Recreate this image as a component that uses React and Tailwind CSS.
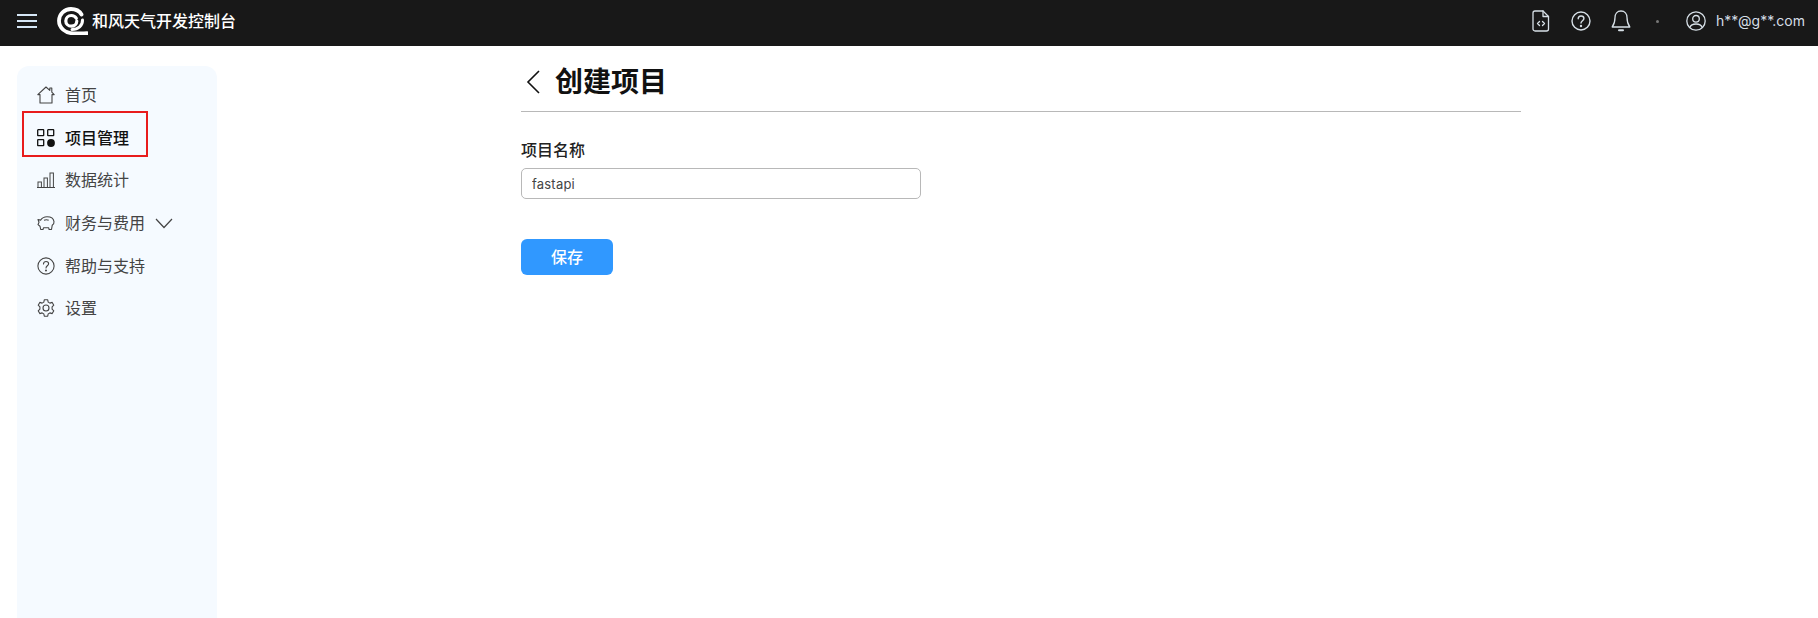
const fontStack = { fontFamily: 'Inter, "Noto Sans CJK SC", sans-serif' }

const HomeIcon = () => (
  <svg width="18" height="18" viewBox="0 0 18 18" fill="none" stroke="currentColor" strokeWidth="1.100" strokeLinejoin="round">
    <path d="M0.800 8.600L9 1l3.800 3.300V2h2v4.200l2.400 2.400h-2.200v8.400H3v-8.400z" />
  </svg>
)

const ProjectIcon = () => (
  <svg width="18" height="18" viewBox="0 0 18 18" fill="none" stroke="currentColor" strokeWidth="1.300">
    <rect x="0.700" y="0.700" width="6" height="6" rx="0.500" />
    <rect x="10.700" y="0.700" width="6" height="6" rx="0.500" />
    <rect x="0.700" y="10.700" width="6" height="6" rx="0.500" />
    <circle cx="14" cy="14" r="3.900" fill="currentColor" stroke="none" />
  </svg>
)

const ChartIcon = () => (
  <svg width="18" height="18" viewBox="0 0 18 18" fill="none" stroke="currentColor" strokeWidth="1">
    <path d="M0 16.500h18" />
    <rect x="1" y="11" width="3.400" height="5.500" />
    <rect x="7" y="7" width="3.400" height="9.500" />
    <rect x="13" y="2" width="3.400" height="14.500" />
  </svg>
)

const PiggyIcon = () => (
  <svg width="18" height="18" viewBox="0 0 18 18" fill="none" stroke="currentColor" strokeWidth="1.100" strokeLinejoin="round">
    <path d="M1 5.500l2.600.6C5 4 7 2.800 10 2.800c3.800 0 6.600 2 7 4.800.2 1.500-.6 2.900-1.800 3.700l-.7 4.200h-2.400l-.4-1.700H6.500L6 15.500H3.700L3 12.200 1 10.600l1-2.300z" />
    <path d="M7 6.300c1.500-.7 3.200-.7 4.700 0" />
  </svg>
)

const HelpIcon = ({ size = 18, width = 1.200 }) => (
  <svg width={size} height={size} viewBox="0 0 20 20" fill="none" stroke="currentColor" strokeWidth={width} strokeLinecap="round">
    <circle cx="10" cy="10" r="9" />
    <path d="M7.200 7.800c0-1.700 1.300-2.800 2.900-2.800s2.800 1.100 2.800 2.500c0 2.200-2.900 2.300-2.900 4.600" />
    <circle cx="10" cy="15" r="0.500" fill="currentColor" />
  </svg>
)

const GearIcon = () => (
  <svg width="18" height="18" viewBox="0 0 18 18" fill="none" stroke="currentColor" strokeWidth="1.100" strokeLinejoin="round">
    <path d="M7.300 .8h3.400l.5 2.300 1.700 1 2.300-.7 1.600 2.800-1.700 1.600v2.400l1.700 1.600-1.600 2.800-2.300-.7-1.700 1-.5 2.300H7.300l-.5-2.300-1.700-1-2.300.7-1.600-2.800 1.700-1.600V7.800L1.200 6.200l1.600-2.800 2.300.7 1.700-1z" />
    <circle cx="9" cy="9" r="3" />
  </svg>
)

// spiral mark: outer sweep with a tail at lower right, inner open ring
const Logo = () => (
  <svg width="31" height="28" viewBox="0 0 31 28" fill="none" stroke="#fff" strokeLinecap="round">
    <path d="M30 26.200c-4 .4-9 .3-13.500.1C8 26.300 2 20.800 2 13.800 2 6.800 7.500 2 14 2c4.500 0 8.500 2 10.500 5.500" strokeWidth="3.800" />
    <path d="M25.500 13c.3 5.500-4.500 9.500-10.500 9.500" strokeWidth="3" />
    <path d="M19.800 14c0 3-2.500 5.200-5.500 5.200s-5.500-2.300-5.500-5.300 2.500-5.400 5.500-5.400c2.200 0 4 1 5 2.800" strokeWidth="3.200" />
  </svg>
)

const FileIcon = () => (
  <svg width="18" height="22" viewBox="0 0 18 22" fill="none" stroke="currentColor" strokeWidth="1.300" strokeLinejoin="round" strokeLinecap="round">
    <path d="M3 1h8l5.500 5.500V19a2 2 0 0 1-2 2H3a2 2 0 0 1-2-2V3a2 2 0 0 1 2-2z" />
    <path d="M11 1v5.500h5.500" />
    <path d="M7.500 11.500L5.500 13.500l2 2M10.500 11.500l2 2-2 2" />
  </svg>
)

const BellIcon = () => (
  <svg width="20" height="22" viewBox="0 0 20 22" fill="none" stroke="currentColor" strokeWidth="1.300" strokeLinejoin="round" strokeLinecap="round">
    <path d="M10 1c-3.800 0-6 2.800-6 6.500 0 4.500-1 7-2.800 9.500h17.600C17 14.500 16 12 16 7.500 16 3.800 13.800 1 10 1z" />
    <path d="M8 20.300h4" strokeWidth="2" />
  </svg>
)

const UserIcon = () => (
  <svg width="20" height="20" viewBox="0 0 20 20" fill="none" stroke="currentColor" strokeWidth="1.300">
    <circle cx="10" cy="10" r="9.200" />
    <circle cx="10" cy="7.800" r="3.300" />
    <path d="M3.800 16.500c.8-2.300 3-3.500 6.200-3.500s5.400 1.200 6.200 3.500" />
  </svg>
)

const navItems = [
  { label: '首页', icon: <HomeIcon /> },
  { label: '项目管理', icon: <ProjectIcon />, active: true },
  { label: '数据统计', icon: <ChartIcon /> },
  { label: '财务与费用', icon: <PiggyIcon />, arrow: true },
  { label: '帮助与支持', icon: <HelpIcon /> },
  { label: '设置', icon: <GearIcon /> },
]

const App = () => {
  return (
    <div className="relative h-[618px] w-[1818px] overflow-hidden bg-white" style={fontStack}>
      {/* Top bar */}
      <header className="flex h-[46px] items-center justify-between bg-[#181818] pb-[4px] pl-[17px] pr-[13px]">
        <div className="flex items-center">
          <div className="flex w-[20px] flex-col gap-[4px]">
            <span className="h-[2px] bg-[#d5e6f5]" />
            <span className="h-[2px] bg-[#d5e6f5]" />
            <span className="h-[2px] bg-[#d5e6f5]" />
          </div>
          <span className="ml-[20px] flex"><Logo /></span>
          <span className="ml-[4px] text-base font-medium text-white">和风天气开发控制台</span>
        </div>
        <div className="flex items-center text-[#d6dfe6]">
          <FileIcon />
          <span className="ml-[21px] flex"><HelpIcon size={20} width={1.400} /></span>
          <span className="ml-[20px] flex"><BellIcon /></span>
          <span className="ml-[25px] h-[3px] w-[3px] rounded-full bg-[#777777]" />
          <span className="ml-[27px] flex"><UserIcon /></span>
          <span className="ml-[10px] text-sm text-[#d6dfe6]">h**@g**.com</span>
        </div>
      </header>

      <div className="flex h-[572px]">
        {/* Sidebar */}
        <aside className="ml-[17px] mt-[20px] h-[600px] w-[200px] rounded-[12px] bg-[#f5faff] pl-[20px] pt-[8px]">
          {navItems.map((item) => (
            <div
              key={item.label}
              className={`flex h-[42.600px] items-center ${item.active ? 'font-medium text-[#111111]' : 'text-[#444444]'}`}
            >
              <span className="flex w-[18px] items-center justify-center">{item.icon}</span>
              <span className="ml-[10px] text-base">{item.label}</span>
              {item.arrow && (
                <svg width="18" height="11" viewBox="0 0 18 11" fill="none" stroke="currentColor" strokeWidth="1.200" className="ml-[10px]">
                  <path d="M1 1l8 8.500L17 1" />
                </svg>
              )}
            </div>
          ))}
        </aside>

        {/* Main content */}
        <main className="ml-[304px] w-[1000px]">
          <div className="flex h-[66px] items-center border-b border-[#b8b8b8] pt-[7px]">
            <svg width="14" height="24" viewBox="0 0 14 24" fill="none" stroke="#111111" strokeWidth="1.600" className="ml-[5px]">
              <path d="M13 1L2 12l11 11" />
            </svg>
            <h1 className="ml-[15px] text-[28px] font-semibold text-[#111111]">创建项目</h1>
          </div>
          <label className="mt-[26px] block text-base font-medium leading-[24px] text-[#222222]">项目名称</label>
          <input
            readOnly
            value="fastapi"
            className="mt-[6px] block h-[31px] w-[400px] rounded-[5px] border border-[#b8b8b8] px-[10px] text-[13px] tracking-[0.2px] text-[#444444] outline-none"
          />
          <button className="mt-[40px] block h-[36px] w-[92px] rounded-[6px] bg-[#3098ff] text-base font-medium text-white">
            保存
          </button>
        </main>
      </div>

      {/* Red annotation box over the nav item */}
      <div className="absolute left-[22px] top-[111px] h-[46px] w-[126px] border-2 border-[#e81c1c]" />
    </div>
  )
}

export default App
